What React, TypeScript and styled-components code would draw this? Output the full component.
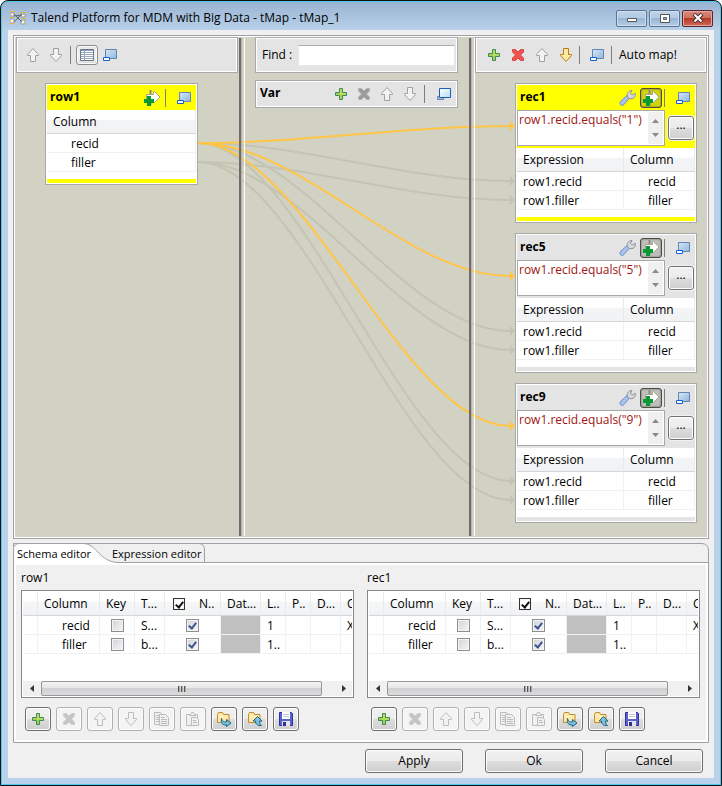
import React from 'react';
import styled, { createGlobalStyle, css } from 'styled-components';

const GlobalStyle = createGlobalStyle`
  * { box-sizing: border-box; }
  body {
    margin: 0;
    background: #fff;
    color: #000;
    font: 12px/16px "Open Sans", "Noto Sans", sans-serif;
  }
  button, input, textarea { font: inherit; color: inherit; margin: 0; }
`;

/* ---------- window ---------- */

const Frame = styled.main`
  min-height: 100vh;
  display: flex;
  flex-direction: column;
  border: 1px solid #111;
  border-radius: 8px 8px 0 0;
  box-shadow: inset 0 0 0 1px #4fc9ee;
  padding: 1px 7px 7px;
  background: linear-gradient(#98b3d2 0, #b9d1ea 30px, #b9d1ea 120px);
`;

const TitleBar = styled.header`
  height: 28px;
  display: flex;
  align-items: center;
  gap: 5px;
  padding: 4px 0 0 2px;
`;

const Title = styled.h1`
  flex: 1;
  margin: 0;
  font-size: 12px;
  font-weight: 400;
  white-space: nowrap;
`;

const WindowButtons = styled.div`
  display: flex;
  gap: 2px;
  padding-right: 1px;
`;

const WindowButton = styled.button<{ $close?: boolean }>`
  width: 31px;
  height: 17px;
  padding: 0;
  display: grid;
  place-items: center;
  border: 1px solid ${p => (p.$close ? '#5a2530' : '#5c7390')};
  border-radius: 2px;
  box-shadow: inset 0 0 0 1px ${p => (p.$close ? '#e3a79d' : '#cfdff0')};
  background: ${p =>
    p.$close
      ? 'linear-gradient(#d98a7c, #cc6f60 48%, #b53a26 50%, #cf6b58)'
      : 'linear-gradient(#bfd3e9, #b2cae4 48%, #98b5d5 50%, #b4cde7)'};
`;

const Client = styled.div`
  flex: 1;
  display: flex;
  flex-direction: column;
  padding: 5px;
  background: #f0f0f0;
`;

/* ---------- mapping area ---------- */

const MapArea = styled.section`
  position: relative;
  flex: 1;
  display: grid;
  grid-template-columns: 225px 6px minmax(0, 1fr) 6px 233px;
  border: 1px solid #a0a0a4;
  background: #d2d2c4;
  box-shadow: inset 0 1px #fff, inset 1px 0 #fff, inset 0 -1px #fff, inset -1px 0 #fff;
`;

const Links = styled.svg`
  position: absolute;
  top: 0;
  left: 184px;
  width: calc(100% - 377px);
  height: 480px;
`;

const Sash = styled.div`
  position: relative;
  margin: 2px 0;
  border-left: 2px solid #6f6b70;
  border-right: 1px solid #fff;
  background: linear-gradient(90deg, #b5b5ac 1px, transparent 1px);
`;

const Pane = styled.div<{ $pad: string }>`
  position: relative;
  min-width: 0;
  padding: ${p => p.$pad};
`;

const Panel = styled.section`
  border: 1px solid #a8a8a8;
  padding: 1px;
  background: #fff;
`;

const ToolPanel = styled(Panel)<{ $tall?: boolean }>`
  & > div {
    height: ${p => (p.$tall ? '32px' : '24px')};
    display: flex;
    align-items: center;
    background: #e4e4e4;
  }
  & + & { margin-top: 7px; }
`;

const Tools = styled.div<{ $gap: number; $indent: number }>`
  gap: ${p => p.$gap}px;
  padding: 0 1px 0 ${p => p.$indent}px;
`;

const Divider = styled.i<{ $before?: number; $after?: number }>`
  flex: none;
  width: 1px;
  height: 18px;
  margin: 0 ${p => p.$after ?? 0}px 0 ${p => p.$before ?? 0}px;
  background: #808078;
`;

const IconButton = styled.button<{ $on?: boolean; $dark?: boolean }>`
  width: 22px;
  height: 20px;
  padding: 0;
  flex: none;
  display: grid;
  place-items: center;
  border: 1px solid transparent;
  border-radius: 3px;
  background: none;
  ${p => p.$on && css`
    border-color: #8c8c8c;
    background: linear-gradient(#e6e6e6, #f2f2f2 60%, #dcdcdc);
    box-shadow: inset 0 0 0 1px #fafafa;
  `}
  ${p => p.$dark && css`
    border-color: #4e4e3c;
    background: rgba(60, 60, 60, 0.22);
    box-shadow: inset 0 0 2px #555;
  `}
`;

const TextButton = styled.button`
  border: 0;
  padding: 0;
  background: none;
  white-space: nowrap;
`;

const FindLabel = styled.label`
  padding: 0 6px 0 5px;
  white-space: nowrap;
`;

const FindInput = styled.input`
  flex: 1;
  min-width: 0;
  height: 21px;
  margin-right: 1px;
  border: 1px solid #e3e9ef;
  border-top-color: #abadb3;
  border-radius: 1px;
  background: #fff;
`;

const PanelHead = styled.div<{ $active?: boolean }>`
  height: 25px;
  display: flex;
  align-items: center;
  padding: 0 1px 0 3px;
  background: ${p => (p.$active ? '#ff0' : '#e4e4e4')};
`;

const PanelTitle = styled.h2`
  flex: 1;
  margin: 0;
  padding-bottom: 2px;
  font-size: 12px;
  font-weight: 700;
`;

const PanelFoot = styled.div<{ $active?: boolean }>`
  height: 4px;
  margin-top: 7px;
  background: ${p => (p.$active ? '#ff0' : '#e4e4e4')};
`;

const FilterRow = styled.div<{ $active?: boolean }>`
  display: grid;
  grid-template-columns: minmax(0, 1fr) 26px;
  gap: 3px;
  height: 38px;
  padding: 0 1px 2px 0;
  align-items: center;
  background: ${p => (p.$active ? '#ff0' : '#e4e4e4')};
`;

const FilterBox = styled.div`
  display: grid;
  grid-template-columns: minmax(0, 1fr) 16px;
  height: 36px;
  border: 1px solid #a8a8a8;
  background: #fff;
`;

const FilterText = styled.textarea`
  min-width: 0;
  height: 34px;
  border: 0;
  padding: 1px 1px 0;
  resize: none;
  overflow: hidden;
  background: none;
  color: #a11414;
`;

const Scroller = styled.div`
  display: flex;
  flex-direction: column;
  justify-content: space-between;
  align-items: center;
  margin: 1px 1px 1px 0;
  padding: 5px 0;
  background: #f0f0f0;
`;

const PushButton = styled.button`
  height: 24px;
  min-width: 26px;
  padding: 0;
  display: grid;
  place-items: center;
  border: 1px solid #707070;
  border-radius: 3px;
  background: linear-gradient(#f2f2f2, #ebebeb 48%, #dddddd 50%, #cfcfcf);
  box-shadow: inset 0 0 0 1px #fcfcfc;
  &:disabled {
    border-color: #adb2b5;
    background: #f4f4f4;
  }
`;

const FilterButton = styled(PushButton)`
  padding-bottom: 6px;
  outline: 1px solid #f0f0f0;
`;

const DialogButton = styled(PushButton)`
  width: 98px;
`;

const MapTable = styled.table`
  width: 100%;
  border-collapse: separate;
  border-spacing: 0;
  table-layout: fixed;
  background: #fff;
  th, td {
    padding: 1px 0 0 6px;
    text-align: left;
    font-weight: 400;
    white-space: nowrap;
    overflow: hidden;
  }
  th {
    height: 24px;
    border-bottom: 1px solid #d5d5d5;
    border-right: 1px solid #e8eaec;
    background: linear-gradient(#fff 40%, #f3f4f5 45%, #f1f2f4);
  }
  td {
    height: 19px;
    border-bottom: 1px solid #f0f0f0;
    border-right: 1px solid #edf1f8;
  }
  td:last-child { padding-left: 24px; }
`;

const RecStack = styled.div`
  display: grid;
  gap: 10px;
  margin: 10px 10px 0 40px;
`;

const InputPanel = styled(Panel)`
  margin: 10px 40px 0 29px;
`;

/* ---------- editor ---------- */

const Editor = styled.section`
  margin-top: 4px;
  border: 1px solid #a0a0a4;
  border-radius: 0 7px 0 0;
`;

const TabBar = styled.div`
  position: relative;
  display: flex;
  height: 19px;
  border-bottom: 1px solid #a0a0a4;
`;

const TabShape = styled.svg`
  position: absolute;
  left: -1px;
  top: -1px;
`;

const Tab = styled.button<{ $wide?: boolean }>`
  position: relative;
  width: ${p => (p.$wide ? '106px' : '87px')};
  height: 19px;
  padding: 0 0 0 ${p => (p.$wide ? '11px' : '3px')};
  border: 0;
  background: none;
  font-size: 11px;
  text-align: left;
  white-space: nowrap;
`;

const EditorBody = styled.div`
  display: grid;
  grid-template-columns: minmax(0, 1fr) minmax(0, 1fr);
  gap: 13px;
  border: 2px solid #fff;
  padding: 5px 6px 9px 5px;
`;

const SchemaTitle = styled.h3`
  margin: 0 0 4px;
  font-size: 12px;
  font-weight: 400;
`;

const Grid = styled.div`
  height: 108px;
  display: flex;
  flex-direction: column;
  border: 1px solid #828790;
  padding: 1px;
  background: #fff;
`;

const GridView = styled.div`
  flex: 1;
  overflow: hidden;
`;

const SchemaTable = styled.table`
  width: 100%;
  table-layout: fixed;
  border-collapse: separate;
  border-spacing: 0;
  th, td {
    padding: 1px 0 0 6px;
    text-align: left;
    font-weight: 400;
    white-space: nowrap;
    overflow: hidden;
  }
  th {
    height: 24px;
    border-bottom: 1px solid #d5d5d5;
    border-right: 1px solid #e8eaec;
    background: linear-gradient(#fff 40%, #f5f6f7 45%, #f1f2f4);
  }
  td {
    height: 19px;
    border-bottom: 1px solid #f0f0f0;
    border-right: 1px solid #edf1f8;
  }
  td:nth-child(2) { padding-left: 24px; }
  th:last-child, td:last-child { border-right: 0; }
`;

const GreyCell = styled.td`
  && {
    background: #c0c0c0;
    background-clip: padding-box;
  }
`;

const CheckCell = styled.td`
  && { padding: 0; text-align: center; }
`;

const NullHead = styled.label`
  display: flex;
  align-items: center;
  gap: 14px;
  padding-left: 2px;
`;

const Tick = styled.input<{ $plain?: boolean }>`
  appearance: none;
  display: block;
  flex: none;
  width: ${p => (p.$plain ? '12px' : '13px')};
  height: ${p => (p.$plain ? '12px' : '13px')};
  margin: ${p => (p.$plain ? '0' : '0 auto')};
  border: 1px solid ${p => (p.$plain ? '#333' : '#8e8f8f')};
  background: ${p => (p.$plain ? '#fff' : 'linear-gradient(135deg, #cfd3d8, #f6f6f6)')};
  box-shadow: inset 0 0 0 1px #f4f4f4;
  &:checked::after {
    content: '';
    display: block;
    box-sizing: border-box;
    width: 5px;
    height: 8px;
    margin: 1px auto 0;
    border: solid ${p => (p.$plain ? '#111' : '#3f5591')};
    border-width: 0 2px 2px 0;
    rotate: 38deg;
  }
`;

const HScroll = styled.div`
  height: 15px;
  display: flex;
  align-items: center;
  background: #f0f0f0;
`;

const ScrollArrow = styled.button`
  width: 18px;
  height: 15px;
  padding: 0;
  display: grid;
  place-items: center;
  border: 0;
  background: none;
`;

const Track = styled.div`
  flex: 1;
`;

const Thumb = styled.div`
  width: 96%;
  height: 15px;
  display: flex;
  justify-content: center;
  align-items: center;
  gap: 1px;
  border: 1px solid #979797;
  border-radius: 2px;
  background: linear-gradient(#f4f4f4, #e6e6e8 45%, #d0d0d3 50%, #dcdcde);
  i {
    width: 2px;
    height: 6px;
    background: linear-gradient(90deg, #555 1px, #aaa 1px);
  }
`;

const ButtonRow = styled.div`
  display: flex;
  gap: 5px;
  padding: 9px 4px 0;
`;

const Footer = styled.footer`
  display: flex;
  justify-content: flex-end;
  gap: 22px;
  padding: 6px 6px 0;
`;

/* ---------- icons ---------- */

const UP = 'M7 1.500 12.500 7.500v1h-3v6h-5v-6h-3v-1Z';
const DOWN = 'M7 14.500 1.500 8.500v-1h3v-6h5v6h3v1Z';

const Up = ({ pale }: { pale?: boolean }) => (
  <svg width="14" height="16" viewBox="0 0 14 16">
    <path d={UP} fill="#f2f2f2" stroke={pale ? '#bdbdbd' : '#a0a0a0'} strokeLinejoin="round" />
  </svg>
);

const Down = ({ pale, gold }: { pale?: boolean; gold?: boolean }) => (
  <svg width="14" height="16" viewBox="0 0 14 16">
    <path d={DOWN} fill={gold ? '#ffeaa0' : '#f2f2f2'} stroke={gold ? '#b57b1b' : pale ? '#bdbdbd' : '#a0a0a0'} strokeLinejoin="round" />
  </svg>
);

const Plus = () => (
  <svg width="14" height="14" viewBox="0 0 14 14">
    <path d="M5.500 1.500h3v4h4v3h-4v4h-3v-4h-4v-3h4Z" fill="#a5d052" stroke="#3d8b57" />
    <path d="M6 7h6M7 2v5" stroke="#c9e66f" />
  </svg>
);

const Cross = ({ color, edge }: { color: string; edge: string }) => (
  <svg width="14" height="14" viewBox="0 0 14 14">
    <path d="M1.500 3.500v-2h3L7 4l2.500-2.500h3v2.500L9.500 7l3 3v2.500h-3L7 10l-2.500 2.500h-3V10l3-3-3-3Z" fill={color} stroke={edge} />
  </svg>
);

const WinIcon = ({ front }: { front?: boolean }) => (
  <svg width="16" height="14" viewBox="0 0 16 14">
    <defs>
      <linearGradient id="glass" x1="0" y1="0" x2="1" y2="1">
        <stop offset="0" stopColor="#d6e8f8" />
        <stop offset="1" stopColor="#8fb6de" />
      </linearGradient>
      <linearGradient id="glassFront" x1="0" y1="0" x2="1" y2="1">
        <stop offset="0" stopColor="#fff" />
        <stop offset="1" stopColor="#b5dcfa" />
      </linearGradient>
    </defs>
    {front && <path d="M1.500 9.500h6v3h-6Z" fill="#a9bbd6" stroke="#6787b8" />}
    <path d="M3.500 1.500h11v9h-11Z" fill={front ? 'url(#glassFront)' : 'url(#glass)'} stroke={front ? '#1c5fb8' : '#6484b4'} />
    {!front && <path d="M1.500 9.500h6v3h-6Z" fill="#fff" stroke="#1260cc" />}
  </svg>
);

const TableIcon = () => (
  <svg width="14" height="12" viewBox="0 0 14 12">
    <path d="M.5.500h13v11H.5Z" fill="#fff" stroke="#6b7687" />
    <path d="M1 1.500h12" stroke="#7f9cc4" />
    <path d="M1 3.500h12M1 5.500h12M1 7.500h12M1 9.500h12M4.500 2v9" stroke="#9aa9bd" />
  </svg>
);

const JoinIcon = () => (
  <svg width="18" height="17" viewBox="0 0 18 17">
    <path d="M7.500 1v15" stroke="#8a8a7a" strokeWidth="2" />
    <path d="M3.500 5.500h7v-3h1l5.500 5.500-5.500 5.500h-1v-3h-7Z" fill="#fff" stroke="#a5a58c" />
    <path d="M4 7h4v3h3v4H8v3H4v-3H1v-4h3Z" fill="#0a9a32" />
  </svg>
);

const Wrench = () => (
  <svg width="20" height="18" viewBox="0 0 20 18">
    <path d="M2 12 8 6.500 10.500 9 5 15.500C4 16.700 2.500 16.700 1.500 15.700.7 14.800.8 13.200 2 12Z" fill="#a9c4ec" stroke="#6f92cc" />
    <path d="M8.500 8C7.500 4.500 9.500 1.500 13 1.500L11.500 4.300 13.200 6 16.300 4.300C17 8 14 10.500 10.500 9.500Z" fill="#d8d8dc" stroke="#8e8e96" />
  </svg>
);

const CopyIcon = () => (
  <svg width="16" height="16" viewBox="0 0 16 16" fill="#f0f0f0" stroke="#bcbcbc">
    <path d="M.5 1.500h6l3 3v9h-9Z" />
    <path d="M5.500 3.500h6l3 3v8h-9ZM7 6.500h4M7 8.500h6M7 10.500h6M7 12.500h6M2 4.500h3M2 6.500h3M2 8.500h3M2 10.500h3" />
  </svg>
);

const PasteIcon = () => (
  <svg width="16" height="16" viewBox="0 0 16 16" fill="#f0f0f0" stroke="#bcbcbc">
    <path d="M1.500 3.500h11v11h-11Z" />
    <path d="M4.500 4.500v-1h1l1-2h2l1 2h1v1ZM6.500 6.500h5l2 2v6h-7ZM8 9.500h3M8 11.500h4" />
  </svg>
);

const FolderIcon = ({ out }: { out?: boolean }) => (
  <svg width="16" height="16" viewBox="0 0 16 16">
    <path d="M1.500 11.500v-8l1-2h4l1 2h5.500v8Z" fill="#ffe9a8" stroke="#c58a2b" />
    <path d="M3.500 5.500h6" stroke="#fff6d6" />
    {out
      ? <path d="M10.500 5.500 15 10h-2.500c0 2 .5 3.500 2 4.500-4 .5-6-1.500-6-4.500H6Z" fill="#7dc3e0" stroke="#1d6486" />
      : <path d="M5.500 7.500c.5 3 2.500 3.500 5 3.500V8.500L15 12l-4.500 3.500V14c-4 .3-6-2-5-6.500Z" fill="#7dc3e0" stroke="#1d6486" />}
  </svg>
);

const SaveIcon = () => (
  <svg width="14" height="14" viewBox="0 0 14 14">
    <path d="M.5.500h12l1 1v12H.5Z" fill="#5a62d0" stroke="#30309a" />
    <path d="M3 0h8v7H3Z" fill="#fff" />
    <path d="M4 2.500h6M4 4.500h6" stroke="#c9c9d6" />
    <path d="M3 9h8v5H3Z" fill="#e4e4ea" />
    <path d="M4 10h3v4H4Z" fill="#30309a" />
  </svg>
);

const ARROWS = {
  up: 'M0 6 3.500 2 7 6Z',
  down: 'M0 1h7L3.500 5Z',
  left: 'M5 0v7L1 3.500Z',
  right: 'M2 0v7l4-3.500Z',
};

const Arrow = ({ dir }: { dir: keyof typeof ARROWS }) => (
  <svg width="7" height="7" viewBox="0 0 7 7">
    <path d={ARROWS[dir]} fill={dir === 'up' || dir === 'down' ? '#8a8a8a' : '#333'} />
  </svg>
);

const AppIcon = () => (
  <svg width="16" height="14" viewBox="0 0 16 14">
    <path d="M0 2h4v3H0ZM0 8h4v4H0ZM11 3h4v3h-4ZM11 9h4v4h-4Z" fill="#f7f7f7" stroke="#9a9a9a" />
    <path d="M0 .5h5M0 6.500h3M0 12.500h4M11 1.500h5M12 7.500h4" stroke="#f0b429" />
    <path d="M4 3 12 11M4 11 12 3M4 5l8-1" stroke="#666" />
  </svg>
);

/* ---------- data ---------- */

const ROW_Y = [107, 126];
const fields = ['recid', 'filler'];
const records = [
  { name: 'rec1', value: '1', active: true, top: 0 },
  { name: 'rec5', value: '5', active: false, top: 150 },
  { name: 'rec9', value: '9', active: false, top: 300 },
];
const schemaColumns = [15, 62, 35, 30, 56, 40, 25, 25, 30, 0];

const Link = ({ from, to, color }: { from: number; to: number; color: string }) => (
  <g>
    <path d={`M0 ${from}C106 ${from} 206 ${to} 312 ${to}`} stroke={color} />
    <path d={`M312 ${to - 5}v10l5-5Z`} fill={color} />
  </g>
);

const Connections = () => (
  <Links viewBox="0 0 317 480" preserveAspectRatio="none" fill="none" strokeWidth="2">
    {records.map(r => fields.map((f, i) => (
      <Link key={r.name + f} from={ROW_Y[i]} to={145 + i * 19 + r.top} color="#c4c4b5" />
    )))}
    {records.map(r => <Link key={r.name} from={ROW_Y[0]} to={90 + r.top} color="#ffc546" />)}
  </Links>
);

const Record = ({ name, value, active }: { name: string; value: string; active: boolean }) => (
  <Panel>
    <PanelHead $active={active}>
      <PanelTitle>{name}</PanelTitle>
      <IconButton aria-label="Settings"><Wrench /></IconButton>
      <IconButton $dark aria-label="Filter"><JoinIcon /></IconButton>
      <Divider $before={2} $after={7} />
      <IconButton aria-label="Minimize"><WinIcon /></IconButton>
    </PanelHead>
    <FilterRow $active={active}>
      <FilterBox>
        <FilterText aria-label={`${name} filter`} rows={2} spellCheck={false} defaultValue={`row1.recid.equals("${value}")`} />
        <Scroller><Arrow dir="up" /><Arrow dir="down" /></Scroller>
      </FilterBox>
      <FilterButton aria-label="Edit filter">...</FilterButton>
    </FilterRow>
    <MapTable>
      <colgroup><col width="107" /><col /></colgroup>
      <thead><tr><th>Expression</th><th>Column</th></tr></thead>
      <tbody>{fields.map(f => <tr key={f}><td>row1.{f}</td><td>{f}</td></tr>)}</tbody>
    </MapTable>
    <PanelFoot $active={active} />
  </Panel>
);

const Schema = ({ name }: { name: string }) => (
  <div>
    <SchemaTitle>{name}</SchemaTitle>
    <Grid>
      <GridView>
        <SchemaTable>
          <colgroup>{schemaColumns.map((w, i) => <col key={i} width={w || undefined} />)}</colgroup>
          <thead>
            <tr>
              <th /><th>Column</th><th>Key</th><th>T...</th>
              <th><NullHead><Tick type="checkbox" $plain defaultChecked />N..</NullHead></th>
              <th>Dat...</th><th>L..</th><th>P..</th><th>D...</th><th>C</th>
            </tr>
          </thead>
          <tbody>
            {fields.map((f, i) => (
              <tr key={f}>
                <td /><td>{f}</td>
                <CheckCell><Tick type="checkbox" aria-label={`${f} key`} /></CheckCell>
                <td>{i ? 'b...' : 'S...'}</td>
                <CheckCell><Tick type="checkbox" aria-label={`${f} nullable`} defaultChecked /></CheckCell>
                <GreyCell /><td>{i ? '1..' : '1'}</td><td /><td /><td>{i ? '' : 'X'}</td>
              </tr>
            ))}
          </tbody>
        </SchemaTable>
      </GridView>
      <HScroll>
        <ScrollArrow aria-label="Scroll left"><Arrow dir="left" /></ScrollArrow>
        <Track><Thumb><i /><i /><i /></Thumb></Track>
        <ScrollArrow aria-label="Scroll right"><Arrow dir="right" /></ScrollArrow>
      </HScroll>
    </Grid>
    <ButtonRow>
      <PushButton aria-label="Add"><Plus /></PushButton>
      <PushButton aria-label="Remove" disabled><Cross color="#c4c4c4" edge="#cfcfcf" /></PushButton>
      <PushButton aria-label="Move up" disabled><Up pale /></PushButton>
      <PushButton aria-label="Move down" disabled><Down pale /></PushButton>
      <PushButton aria-label="Copy" disabled><CopyIcon /></PushButton>
      <PushButton aria-label="Paste" disabled><PasteIcon /></PushButton>
      <PushButton aria-label="Import"><FolderIcon /></PushButton>
      <PushButton aria-label="Export"><FolderIcon out /></PushButton>
      <PushButton aria-label="Save"><SaveIcon /></PushButton>
    </ButtonRow>
  </div>
);

export default function App() {
  return (
    <>
      <GlobalStyle />
      <Frame>
        <TitleBar>
          <AppIcon />
          <Title>Talend Platform for MDM with Big Data - tMap - tMap_1</Title>
          <WindowButtons>
            <WindowButton aria-label="Minimize window">
              <svg width="12" height="9" viewBox="0 0 12 9"><path d="M1.500 4.500h9v3h-9Z" fill="#fff" stroke="#555" /></svg>
            </WindowButton>
            <WindowButton aria-label="Maximize window">
              <svg width="12" height="9" viewBox="0 0 12 9"><path d="M1.500.500h9v8h-9Z" fill="#fff" stroke="#555" /><path d="M4.500 3.500h3v2h-3Z" fill="#a9c2de" stroke="#555" /></svg>
            </WindowButton>
            <WindowButton $close aria-label="Close window">
              <svg width="12" height="10" viewBox="0 0 12 10"><path d="M2 1l8 8M10 1 2 9" stroke="#4a3038" strokeWidth="4" /><path d="M2.500 1.500l7 7M9.500 1.500l-7 7" stroke="#fff" strokeWidth="2" /></svg>
            </WindowButton>
          </WindowButtons>
        </TitleBar>
        <Client>
          <MapArea>
            <Connections />
            <Pane $pad="1px 1px 0 2px">
              <ToolPanel $tall>
                <Tools $gap={1} $indent={4}>
                  <IconButton aria-label="Move up"><Up /></IconButton>
                  <IconButton aria-label="Move down"><Down /></IconButton>
                  <Divider $before={2} $after={4} />
                  <IconButton $on aria-label="Show columns"><TableIcon /></IconButton>
                  <IconButton aria-label="Minimize tables"><WinIcon /></IconButton>
                </Tools>
              </ToolPanel>
              <InputPanel>
                <PanelHead $active>
                  <PanelTitle>row1</PanelTitle>
                  <IconButton aria-label="Filter"><JoinIcon /></IconButton>
                  <Divider $before={2} $after={7} />
                  <IconButton aria-label="Minimize"><WinIcon /></IconButton>
                </PanelHead>
                <MapTable>
                  <thead><tr><th>Column</th></tr></thead>
                  <tbody>{fields.map(f => <tr key={f}><td>{f}</td></tr>)}</tbody>
                </MapTable>
                <PanelFoot $active />
              </InputPanel>
            </Pane>
            <Sash />
            <Pane $pad="1px 11px 0 10px">
              <ToolPanel $tall>
                <div>
                  <FindLabel htmlFor="find">Find :</FindLabel>
                  <FindInput id="find" />
                </div>
              </ToolPanel>
              <ToolPanel>
                <Tools $gap={1} $indent={3}>
                  <PanelTitle>Var</PanelTitle>
                  <IconButton aria-label="Add variable"><Plus /></IconButton>
                  <IconButton aria-label="Remove variable"><Cross color="#9c9c9c" edge="#b5b5b5" /></IconButton>
                  <IconButton aria-label="Move up"><Up /></IconButton>
                  <IconButton aria-label="Move down"><Down /></IconButton>
                  <Divider $before={2} $after={7} />
                  <IconButton aria-label="Restore"><WinIcon front /></IconButton>
                </Tools>
              </ToolPanel>
            </Pane>
            <Sash />
            <Pane $pad="1px 1px 0 0">
              <ToolPanel $tall>
                <Tools $gap={2} $indent={6}>
                  <IconButton aria-label="Add output"><Plus /></IconButton>
                  <IconButton aria-label="Remove output"><Cross color="#ef5350" edge="#d9474b" /></IconButton>
                  <IconButton aria-label="Move up"><Up /></IconButton>
                  <IconButton aria-label="Move down"><Down gold /></IconButton>
                  <Divider $after={4} />
                  <IconButton aria-label="Minimize tables"><WinIcon /></IconButton>
                  <Divider $before={1} $after={5} />
                  <TextButton>Auto map!</TextButton>
                </Tools>
              </ToolPanel>
              <RecStack>
                {records.map(r => <Record key={r.name} name={r.name} value={r.value} active={r.active} />)}
              </RecStack>
            </Pane>
          </MapArea>
          <Editor>
            <TabBar role="tablist">
              <TabShape width="194" height="20" viewBox="0 0 194 20">
                <path d="M0 20V5Q1 1 5 .5H70C84 .5 86 19.500 106 19.500V20Z" fill="#fff" />
                <path d="M.5 20V6Q1 1 6 .5H70C84 .5 86 19.500 106 19.500M70 .5H186Q191.500 1 191.500 7V20" fill="none" stroke="#a0a0a4" />
              </TabShape>
              <Tab role="tab" aria-selected="true">Schema editor</Tab>
              <Tab role="tab" aria-selected="false" $wide>Expression editor</Tab>
            </TabBar>
            <EditorBody>
              <Schema name="row1" />
              <Schema name="rec1" />
            </EditorBody>
          </Editor>
          <Footer>
            <DialogButton>Apply</DialogButton>
            <DialogButton>Ok</DialogButton>
            <DialogButton>Cancel</DialogButton>
          </Footer>
        </Client>
      </Frame>
    </>
  );
}
